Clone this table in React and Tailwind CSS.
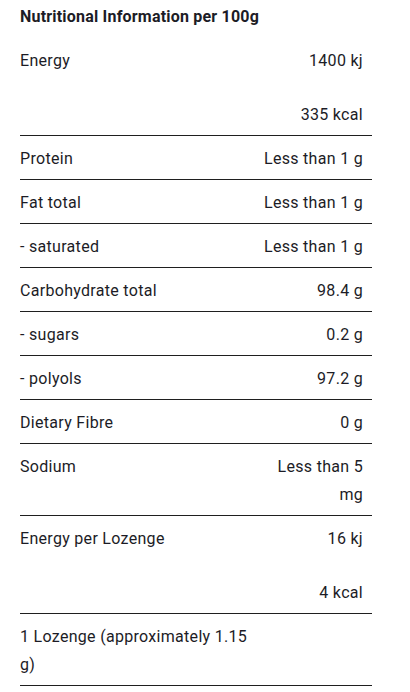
import React from 'react';

// Tabel nilai gizi per 100g
const rows = [
  { label: 'Protein', value: ['Less than 1 g'] },
  { label: 'Fat total', value: ['Less than 1 g'] },
  { label: '- saturated', value: ['Less than 1 g'] },
  { label: 'Carbohydrate total', value: ['98.4 g'] },
  { label: '- sugars', value: ['0.2 g'] },
  { label: '- polyols', value: ['97.2 g'] },
  { label: 'Dietary Fibre', value: ['0 g'] },
  { label: 'Sodium', value: ['Less than 5 mg'] },
];

const Row = ({ label, value }) => (
  <div className="grid grid-cols-[1fr_110px] border-b border-[#1f1f1f] pt-[9px] pb-[6px]">
    <div className="leading-[28px] pr-2">{label}</div>
    <div className="leading-[28px] text-right pr-[9px]">
      {value.map((v, i) => (
        <div key={i} className={i > 0 ? 'mt-[26px]' : ''}>{v}</div>
      ))}
    </div>
  </div>
);

export default function App() {
  return (
    <div className="min-h-screen bg-white text-[#1c1c26] text-[16px] tracking-[0.3px] font-['Roboto',sans-serif]">
      <div className="w-[352px] ml-[20px]">
        <h2 className="h-[38px] pt-[6px] font-bold text-[16px] tracking-[0.2px] leading-[22px]">Nutritional Information per 100g</h2>
        <Row label="Energy" value={['1400 kj', '335 kcal']} />
        {rows.map((r) => (
          <Row key={r.label} {...r} />
        ))}
        <Row label="Energy per Lozenge" value={['16 kj', '4 kcal']} />
        <Row label="1 Lozenge (approximately 1.15 g)" value={[]} />
      </div>
    </div>
  );
}
